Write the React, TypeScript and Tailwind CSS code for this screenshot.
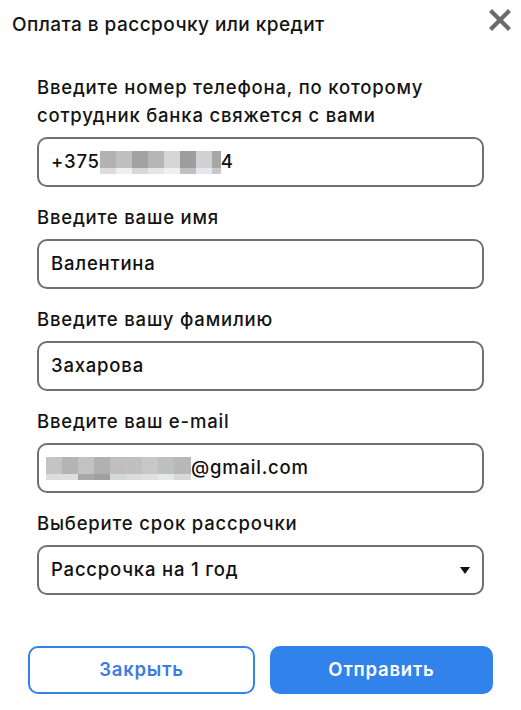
import type { ReactNode } from "react";

const phoneBlur = [
  { w: "w-[16px]", top: "bg-[#b2b2b2]", bottom: "bg-[#dcdcdc]" },
  { w: "w-[16px]", top: "bg-[#c0c0c0]", bottom: "bg-[#f0f0f0]" },
  { w: "w-[16px]", top: "bg-[#a2a2a2]", bottom: "bg-[#d8d8d8]" },
  { w: "w-[16px]", top: "bg-[#b4b6b5]", bottom: "bg-[#e6e6e6]" },
  { w: "w-[16px]", top: "bg-[#d6d6d6]", bottom: "bg-[#f0f0f0]" },
  { w: "w-[16px]", top: "bg-[#9e9e9e]", bottom: "bg-[#c4c0c0]" },
  { w: "w-[16px]", top: "bg-[#d0d2d4]", bottom: "bg-[#e4e8ea]" },
  { w: "w-[9px]", top: "bg-[#a6a8a8]", bottom: "bg-[#c8c8c8]" },
];

const emailBlur = [
  { w: "w-[16px]", top: "bg-[#c4c4c4]", bottom: "bg-[#dcdcdc]" },
  { w: "w-[16px]", top: "bg-[#b4b4b4]", bottom: "bg-[#dedede]" },
  { w: "w-[16px]", top: "bg-[#c2c2c2]", bottom: "bg-[#a8a8a8]" },
  { w: "w-[16px]", top: "bg-[#b0b0b0]", bottom: "bg-[#a0a0a0]" },
  { w: "w-[16px]", top: "bg-[#c0bebe]", bottom: "bg-[#d4d8da]" },
  { w: "w-[16px]", top: "bg-[#c0c0c0]", bottom: "bg-[#dcdcdc]" },
  { w: "w-[16px]", top: "bg-[#c8c8c6]", bottom: "bg-[#e0e0e0]" },
  { w: "w-[16px]", top: "bg-[#bcc0c0]", bottom: "bg-[#e8e8e8]" },
  { w: "w-[17px]", top: "bg-[#b8b8b8]", bottom: "bg-[#d8d8d8]" },
];

type BlurCell = { w: string; top: string; bottom: string };

function Blur({ cells, className = "" }: { cells: BlurCell[]; className?: string }) {
  return (
    <span className={`inline-flex h-[23px] ${className}`} aria-hidden="true">
      {cells.map((cell, i) => (
        <span key={i} className={`flex flex-col ${cell.w}`}>
          <span className={`h-[17px] ${cell.top}`} />
          <span className={`h-[6px] ${cell.bottom}`} />
        </span>
      ))}
    </span>
  );
}

function Field({ label, children }: { label: ReactNode; children: ReactNode }) {
  return (
    <div className="flex flex-col">
      <p className="mb-2 text-[18.5px] leading-[28px] font-medium tracking-[0.8px] text-[#141414]">
        {label}
      </p>
      <div className="flex h-[50px] items-center rounded-[10px] border-2 border-[#6e7075] pl-3 pr-3 text-[18.5px] font-medium tracking-[0.8px] text-[#111]">
        {children}
      </div>
    </div>
  );
}

export default function App() {
  return (
    <div
      className="h-[710px] w-[521px] bg-white"
      style={{ fontFamily: "Inter, 'Noto Sans', sans-serif" }}
    >
      <div className="flex items-start justify-between pl-3 pr-[10px] pt-[9px]">
        <h1 className="mt-[2px] text-[19px] leading-[28px] font-medium tracking-[0.45px] text-[#141414]">
          Оплата в рассрочку или кредит
        </h1>
        <button type="button" aria-label="Закрыть" className="size-[22px]">
          <svg viewBox="0 0 22 22" className="size-[22px]">
            <path d="M3 3 L19 19 M19 3 L3 19" stroke="#6b6b6b" strokeWidth="4.2" strokeLinecap="square" />
          </svg>
        </button>
      </div>

      <div className="mt-[34px] flex flex-col gap-4 px-[37px]">
        <Field
          label={
            <>
              Введите номер телефона, по которому
              <br />
              сотрудник банка свяжется с вами
            </>
          }
        >
          <span>+375</span>
          <Blur cells={phoneBlur} />
          <span>4</span>
        </Field>
        <Field label="Введите ваше имя">
          <span>Валентина</span>
        </Field>
        <Field label="Введите вашу фамилию">
          <span>Захарова</span>
        </Field>
        <Field label="Введите ваш e-mail">
          <Blur cells={emailBlur} className="-ml-[5px]" />
          <span>@gmail.com</span>
        </Field>
        <Field label="Выберите срок рассрочки">
          <span className="flex-1">Рассрочка на 1 год</span>
          <svg viewBox="0 0 10 7" className="h-[7px] w-[10px]">
            <path d="M0 0 H10 L5 7 Z" fill="#111" />
          </svg>
        </Field>
      </div>

      <div className="mt-[51px] flex gap-[15px] px-[28px]">
        <button
          type="button"
          className="h-[48px] flex-1 rounded-[10px] border-2 border-[#3382ea] bg-white text-[18.5px] font-semibold tracking-[0.8px] text-[#3b7de3]"
        >
          Закрыть
        </button>
        <button
          type="button"
          className="h-[48px] flex-1 rounded-[10px] bg-[#3182ea] text-[18.5px] font-semibold tracking-[0.8px] text-white"
        >
          Отправить
        </button>
      </div>
    </div>
  );
}
